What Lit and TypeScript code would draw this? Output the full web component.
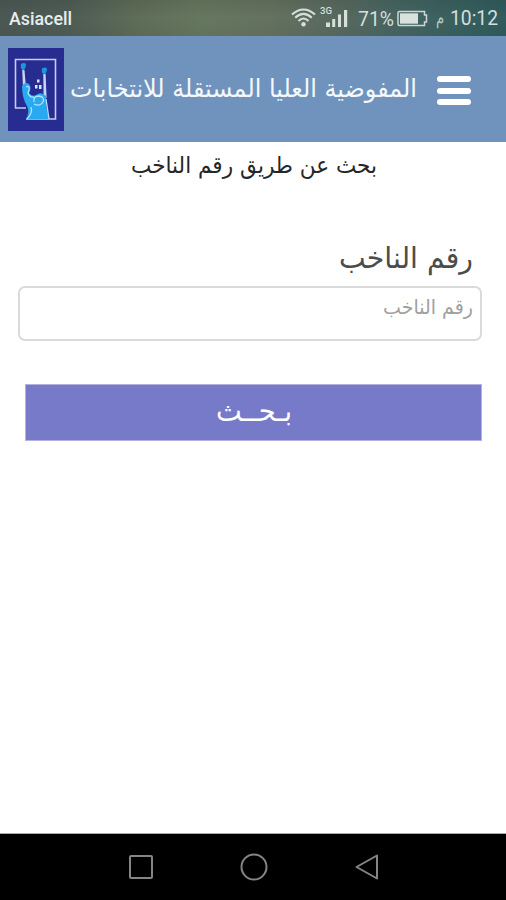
import { LitElement, html, css, svg } from "lit";
import { customElement, property } from "lit/decorators.js";

/* Single line of text set to an exact measure. */
@customElement("fit-line")
class FitLine extends LitElement {
  @property() text = "";
  @property({ type: Number }) width = 100;
  @property({ type: Number }) height = 30;
  @property({ type: Number }) baseline = 22;
  static styles = css`
    :host { display: block; flex: none; }
    svg { display: block; overflow: visible; }
    text { fill: currentColor; }
  `;
  render() {
    return html`<svg width=${this.width} height=${this.height} direction="ltr">
      ${svg`<text x=${this.width / 2} y=${this.baseline} text-anchor="middle" textLength=${this.width} lengthAdjust="spacingAndGlyphs">${this.text}</text>`}
    </svg>`;
  }
}

@customElement("status-bar")
class StatusBar extends LitElement {
  static styles = css`
    :host {
      display: flex; height: 36px; box-sizing: border-box; padding: 0 8px 0 9px;
      align-items: center; color: #e8eeec;
      font-family: Roboto, "Liberation Sans", sans-serif;
      background: linear-gradient(180deg, rgba(0,0,0,.08), rgba(0,0,0,0) 50%, rgba(0,0,0,.04)),
        linear-gradient(90deg, #4b5854 0, #4f5d55 70px, #5f6e58 140px, #667760 200px, #64725f 270px, #58695f 340px, #456562 400px, #38605f 460px, #315b5d 506px);
    }
    .carrier { font-size: 18px; font-weight: 500; }
    .space { flex: 1; }
    .num { font-size: 20px; color: #d3dfdd; }
    .glyphs { display: block; flex: none; }
    .wifi { margin-right: 4px; }
    .signal { margin-right: 10px; }
    .battery { margin: 0 7px 0 3px; }
    .ampm { font-size: 18px; color: #b9c9c8; margin-right: 6px; }
  `;
  render() {
    return html`
      <fit-line class="carrier" text="Asiacell" width="63" height="36" baseline="25"></fit-line>
      <span class="space"></span>
      <svg class="glyphs wifi" width="25" height="36" fill="none" stroke="#d6dfdb" stroke-width="2.100">
        <path d="M1 14.500Q12.500 4.500 24 14.500M4.200 17.700Q12.500 10 20.800 17.700M7.500 21Q12.500 16 17.500 21"/>
        <circle cx="12.500" cy="24.200" r="2.200" fill="#d6dfdb" stroke="none"/>
      </svg>
      <svg class="glyphs signal" width="28" height="36" fill="#d6dfdb">
        <text x="0" y="13.500" font-size="9.500" font-weight="500" textLength="12" lengthAdjust="spacingAndGlyphs">3G</text>
        <path d="M6 22.500h4V27H6zM12.200 19h3v8h-3zM18 14.500h3V27h-3zM24 10h3.200v17H24z"/>
      </svg>
      <fit-line class="num" text="71%" width="36" height="36" baseline="26"></fit-line>
      <svg class="glyphs battery" width="32" height="36">
        <path d="M2.500 11.500h25v3.500h2v7h-2v3.500h-25q-1.500 0-1.500-1.500v-11q0-1.500 1.500-1.500z" fill="none" stroke="#cbd7d4" stroke-width="1.500"/>
        <path d="M3 13.300h18v10.400H3z" fill="#d9e1df"/>
      </svg>
      <fit-line class="ampm" text="م" width="8" height="36" baseline="24"></fit-line>
      <fit-line class="num" text="10:12" width="48" height="36" baseline="25"></fit-line>
    `;
  }
}

@customElement("app-root")
class AppRoot extends LitElement {
  static styles = css`
    :host {
      display: flex; flex-direction: column; width: 506px; height: 900px;
      background: #fff; overflow: hidden;
      font-family: "DejaVu Sans", "Noto Sans", sans-serif;
    }
    status-bar { flex: none; }
    .header {
      flex: none; height: 106px; box-sizing: border-box; padding: 12px 35px 0 8px;
      display: flex; align-items: flex-start; background: #6f93bc; color: #f4f8fc;
    }
    .logo { display: block; flex: none; }
    .title { margin: 21px 0 0 6px; font-size: 24.500px; }
    .menu {
      margin: 28px 0 0 auto; padding: 0; border: 0; background: none; width: 34px;
      display: flex; flex-direction: column; gap: 5.500px;
    }
    .menu i { height: 6px; border-radius: 3px; background: #fff; }
    main { flex: 1; display: flex; flex-direction: column; }
    .heading { align-self: center; color: #262626; font-size: 23px; margin-left: 2px; }
    .label { align-self: flex-end; margin: 68px 33px 0 0; font-size: 29.500px; color: #4c4c4c; }
    .field {
      margin: 6px 24px 0 18px; height: 55px; box-sizing: border-box;
      border: 2px solid #dadada; border-radius: 7px; display: flex;
      justify-content: flex-end; padding-right: 7px; color: #a0a0a0; font-size: 20px;
    }
    .search {
      margin: 43px 24px 0 25px; padding: 0; height: 57px; box-sizing: border-box;
      border: 1px solid #b4b1df; background: #7779c9; color: #fff; display: flex;
      justify-content: center; font-family: inherit; font-size: 29px;
    }
    .search fit-line { margin-left: 1px; }
    .nav { flex: none; height: 67px; background: #000; border-top: 1px solid #aaa; box-sizing: border-box;
      display: flex; justify-content: space-between; padding: 18px 125px 0 127px; }
    .nav svg { display: block; fill: none; stroke: #858585; stroke-width: 2; stroke-linejoin: round; }
  `;
  render() {
    return html`
      <status-bar></status-bar>
      <header class="header">
        <svg class="logo" width="56" height="83">
          <path d="M0 0h56v83H0z" fill="#272c91"/>
          <path d="M18 60H7.500V11.500H47.500V71H18" fill="none" stroke="#c9caee" stroke-width="1.600"/>
          <path d="M14.200 22h2.300l1.500 18h-3zM35.300 26h2.300l1 24h-3z" fill="#c6d4f2"/>
          <path d="M14 38Q17 33 21 36Q24 40 21 45Q24 49 28 47Q33 43 38 48L38.500 60L41 71H18Q22 64 19 58Q14 50 14 38Z" fill="#28a9f0"/>
          <path d="M18 39q4-2 3 3l-1 3q2 5 6 4M26 54q-1-6 5-6q6 1 4 6q-3 5-9 2M19 71q6-6 4-12M38 51l3 20" fill="none" stroke="#b1e3fc" stroke-width="1.300"/>
          <path d="M13 16q3-2 5 0q0 5-3 6.500q-3-2-2-6.500zM34 20.500q3-2 5 0q0 5-3 6q-3-2-2-6z" fill="#1d95d8"/>
          <path d="M29 31.500h2.500v3H29zM27 37h2.500v3.500H27zM31 37h2.500v4H31z" fill="#d6e9f8"/>
        </svg>
        <fit-line class="title" text="المفوضية العليا المستقلة للانتخابات" width="347" height="30" baseline="27.500"></fit-line>
        <button class="menu" aria-label="القائمة"><i></i><i></i><i></i></button>
      </header>
      <main>
        <fit-line class="heading" text="بحث عن طريق رقم الناخب" width="246" height="36" baseline="30.500"></fit-line>
        <fit-line class="label" text="رقم الناخب" width="134" height="34" baseline="22"></fit-line>
        <div class="field">
          <fit-line text="رقم الناخب" width="90" height="40" baseline="26"></fit-line>
        </div>
        <button class="search">
          <fit-line text="بـحــث" width="76" height="50" baseline="36"></fit-line>
        </button>
      </main>
      <nav class="nav">
        <svg width="28" height="30"><rect x="3" y="4" width="22" height="22" rx="1"/></svg>
        <svg width="28" height="30"><circle cx="14" cy="15" r="12.500"/></svg>
        <svg width="28" height="30"><path d="M24 3.500v23L3.500 15z"/></svg>
      </nav>
    `;
  }
}
